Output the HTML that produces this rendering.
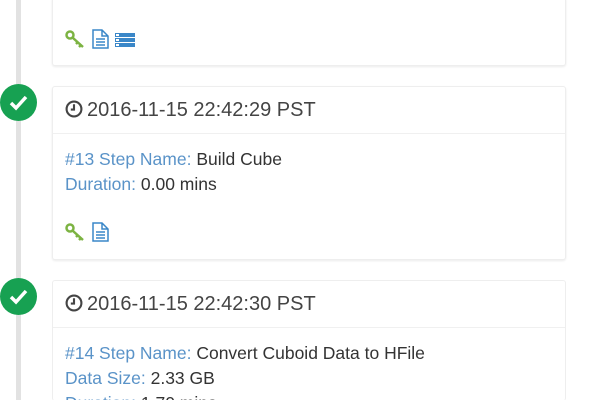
<!DOCTYPE html>
<html style="overflow:hidden;height:400px"><head><meta charset="utf-8"><style>
body{margin:0;width:600px;height:400px;overflow:hidden;background:#fff;font-family:"Liberation Sans",sans-serif;position:relative}
.line{position:absolute;left:16px;top:0;width:5px;height:400px;background:#e2e2e2}
.circ{position:absolute;left:0;width:37px;height:37px;border-radius:50%;background:#17a152}
.circ svg{position:absolute;left:9px;top:10px}
.card{position:absolute;left:52px;width:512px;background:#fff;border:1px solid #eee;border-radius:3px;box-shadow:0 1px 2px rgba(0,0,0,.08);overflow:hidden}
.hd{height:46px;border-bottom:1px solid #f0f0f0;font-size:20px;color:#444;line-height:46px;padding-left:12px;white-space:nowrap}
.hd svg{vertical-align:-2px;margin-right:4px}
.bd{padding:13px 12px 0;font-size:17.5px;line-height:25px;color:#333;white-space:nowrap}
.l{color:#5a93c8}
.ic{position:absolute;left:12px}
</style></head><body>
<div class="line"></div>
<div class="card" style="top:-4px;height:69px;border-top:none">
 <div class="ic" style="top:32px">
  <svg width="84" height="22" viewBox="0 0 84 22">
   <g fill="none" stroke="#7cb342" stroke-width="2.5"><circle cx="5" cy="7" r="3.5"/><path d="M8 10 L18 19 M13 14 L11 16 M16 17 L14 19"/></g>
   <g fill="none" stroke="#3a87c8" stroke-width="1.5"><path d="M28 2 H37 L43 8 V20 H28 Z M37 2 V8 H43"/><path d="M31 11 H40 M31 14 H40 M31 17 H40"/></g>
   <g fill="#3a87c8"><rect x="50" y="5" width="20" height="4"/><rect x="50" y="10" width="20" height="4"/><rect x="50" y="15" width="20" height="4"/></g>
   <g fill="#fff"><rect x="51" y="6" width="3" height="2"/><rect x="51" y="11" width="3" height="2"/><rect x="51" y="16" width="3" height="2"/></g>
  </svg>
 </div>
</div>

<div class="circ" style="top:84px"><svg width="19" height="17" viewBox="0 0 19 17"><path d="M2 9 L7 14 L17 3" fill="none" stroke="#fff" stroke-width="3.5"/></svg></div>
<div class="card" style="top:86px;height:172px">
 <div class="hd"><svg width="18" height="18" viewBox="0 0 17 17"><circle cx="8.5" cy="8.5" r="7" fill="none" stroke="#444" stroke-width="2"/><path d="M8.5 4 V9 H5.5" fill="none" stroke="#444" stroke-width="2"/></svg>2016-11-15 22:42:29 PST</div>
 <div class="bd"><span class="l">#13 Step Name:</span> Build Cube<br><span class="l">Duration:</span> 0.00 mins</div>
 <div class="ic" style="top:134px">
  <svg width="50" height="22" viewBox="0 0 50 22">
   <g fill="none" stroke="#7cb342" stroke-width="2.5"><circle cx="5" cy="7" r="3.5"/><path d="M8 10 L18 19 M13 14 L11 16 M16 17 L14 19"/></g>
   <g fill="none" stroke="#3a87c8" stroke-width="1.5"><path d="M28 2 H37 L43 8 V20 H28 Z M37 2 V8 H43"/><path d="M31 11 H40 M31 14 H40 M31 17 H40"/></g>
  </svg>
 </div>
</div>

<div class="circ" style="top:278px"><svg width="19" height="17" viewBox="0 0 19 17"><path d="M2 9 L7 14 L17 3" fill="none" stroke="#fff" stroke-width="3.5"/></svg></div>
<div class="card" style="top:280px;height:120px;border-bottom:none;box-shadow:none">
 <div class="hd"><svg width="18" height="18" viewBox="0 0 17 17"><circle cx="8.5" cy="8.5" r="7" fill="none" stroke="#444" stroke-width="2"/><path d="M8.5 4 V9 H5.5" fill="none" stroke="#444" stroke-width="2"/></svg>2016-11-15 22:42:30 PST</div>
 <div class="bd"><span class="l">#14 Step Name:</span> Convert Cuboid Data to HFile<br><span class="l">Data Size:</span> 2.33 GB<br><span class="l">Duration:</span> 1.70 mins</div>
</div>
</body></html>
